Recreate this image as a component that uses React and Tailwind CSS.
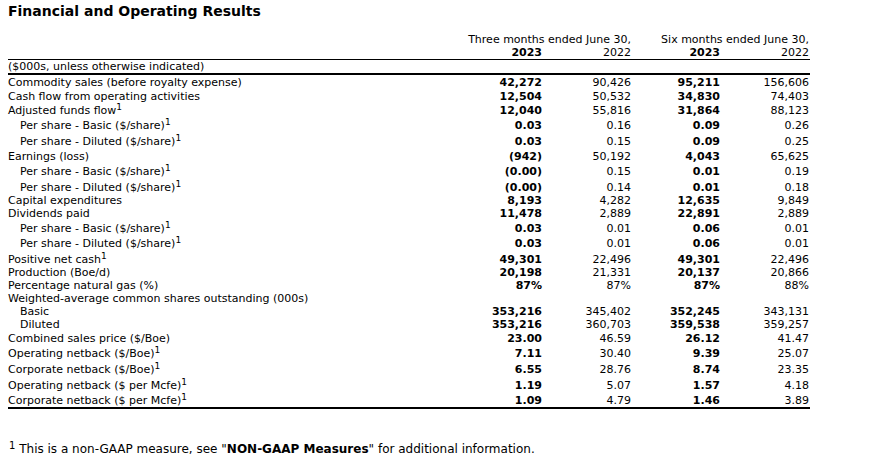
import React from "react";

const rows = [
  ["Commodity sales (before royalty expense)", 0, 0, ["42,272", "90,426", "95,211", "156,606"], 14],
  ["Cash flow from operating activities", 0, 0, ["12,504", "50,532", "34,830", "74,403"], 14],
  ["Adjusted funds flow", 0, 1, ["12,040", "55,816", "31,864", "88,123"], 14],
  ["Per share - Basic ($/share)", 1, 1, ["0.03", "0.16", "0.09", "0.26"], 15],
  ["Per share - Diluted ($/share)", 1, 1, ["0.03", "0.15", "0.09", "0.25"], 16],
  ["Earnings (loss)", 0, 0, ["(942)", "50,192", "4,043", "65,625"], 15],
  ["Per share - Basic ($/share)", 1, 1, ["(0.00)", "0.15", "0.01", "0.19"], 15],
  ["Per share - Diluted ($/share)", 1, 1, ["(0.00)", "0.14", "0.01", "0.18"], 16],
  ["Capital expenditures", 0, 0, ["8,193", "4,282", "12,635", "9,849"], 13],
  ["Dividends paid", 0, 0, ["11,478", "2,889", "22,891", "2,889"], 13],
  ["Per share - Basic ($/share)", 1, 1, ["0.03", "0.01", "0.06", "0.01"], 15],
  ["Per share - Diluted ($/share)", 1, 1, ["0.03", "0.01", "0.06", "0.01"], 15],
  ["Positive net cash", 0, 1, ["49,301", "22,496", "49,301", "22,496"], 16],
  ["Production (Boe/d)", 0, 0, ["20,198", "21,331", "20,137", "20,866"], 13],
  ["Percentage natural gas (%)", 0, 0, ["87%", "87%", "87%", "88%"], 13],
  ["Weighted-average common shares outstanding (000s)", 0, 0, ["", "", "", ""], 13],
  ["Basic", 1, 0, ["353,216", "345,402", "352,245", "343,131"], 13],
  ["Diluted", 1, 0, ["353,216", "360,703", "359,538", "359,257"], 13],
  ["Combined sales price ($/Boe)", 0, 0, ["23.00", "46.59", "26.12", "41.47"], 14],
  ["Operating netback ($/Boe)", 0, 1, ["7.11", "30.40", "9.39", "25.07"], 15],
  ["Corporate netback ($/Boe)", 0, 1, ["6.55", "28.76", "8.74", "23.35"], 16],
  ["Operating netback ($ per Mcfe)", 0, 1, ["1.19", "5.07", "1.57", "4.18"], 16],
  ["Corporate netback ($ per Mcfe)", 0, 1, ["1.09", "4.79", "1.46", "3.89"], 15],
];

const Sup = () => <sup className="text-[9px] relative -top-[4px]">1</sup>;

export default function App() {
  return (
    <div
      className="w-[870px] h-[462px] bg-white text-black pl-[8px]"
      style={{ fontFamily: '"DejaVu Sans", Verdana, sans-serif' }}
    >
      <div className="pt-[2px] h-[33px] text-[14px] font-bold leading-[18px]">
        Financial and Operating Results
      </div>
      <div className="w-[802px] text-[11px]">
        <div className="grid grid-cols-[445px_178px_178px] leading-[13px] h-[13px]">
          <div></div>
          <div className="text-right">Three months ended June 30,</div>
          <div className="text-right">Six months ended June 30,</div>
        </div>
        <div className="grid grid-cols-[445px_89px_89px_89px_89px] leading-[13px] h-[14px] border-b border-black">
          <div></div>
          <div className="text-right font-bold">2023</div>
          <div className="text-right">2022</div>
          <div className="text-right font-bold">2023</div>
          <div className="text-right">2022</div>
        </div>
        <div className="h-[15px] leading-[13px] border-b-2 border-black flex items-end">
          ($000s, unless otherwise indicated)
        </div>
        <div className="border-b-2 border-black">
          {rows.map(([label, indent, sup, vals, h], i) => (
            <div
              key={i}
              className="grid grid-cols-[445px_89px_89px_89px_89px] leading-[13px] items-end"
              style={{ height: h }}
            >
              <div className={indent ? "pl-[12px]" : ""}>
                {label}
                {sup ? <Sup /> : null}
              </div>
              <div className="text-right font-bold">{vals[0]}</div>
              <div className="text-right">{vals[1]}</div>
              <div className="text-right font-bold">{vals[2]}</div>
              <div className="text-right">{vals[3]}</div>
            </div>
          ))}
        </div>
        <div className="mt-[33px] text-[12px] leading-[15px] pl-[1px]">
          <sup className="text-[10px] relative -top-[4px]">1</sup> This is a non-GAAP measure, see "<span className="font-bold">NON-GAAP Measures</span>" for additional information.
        </div>
      </div>
    </div>
  );
}
